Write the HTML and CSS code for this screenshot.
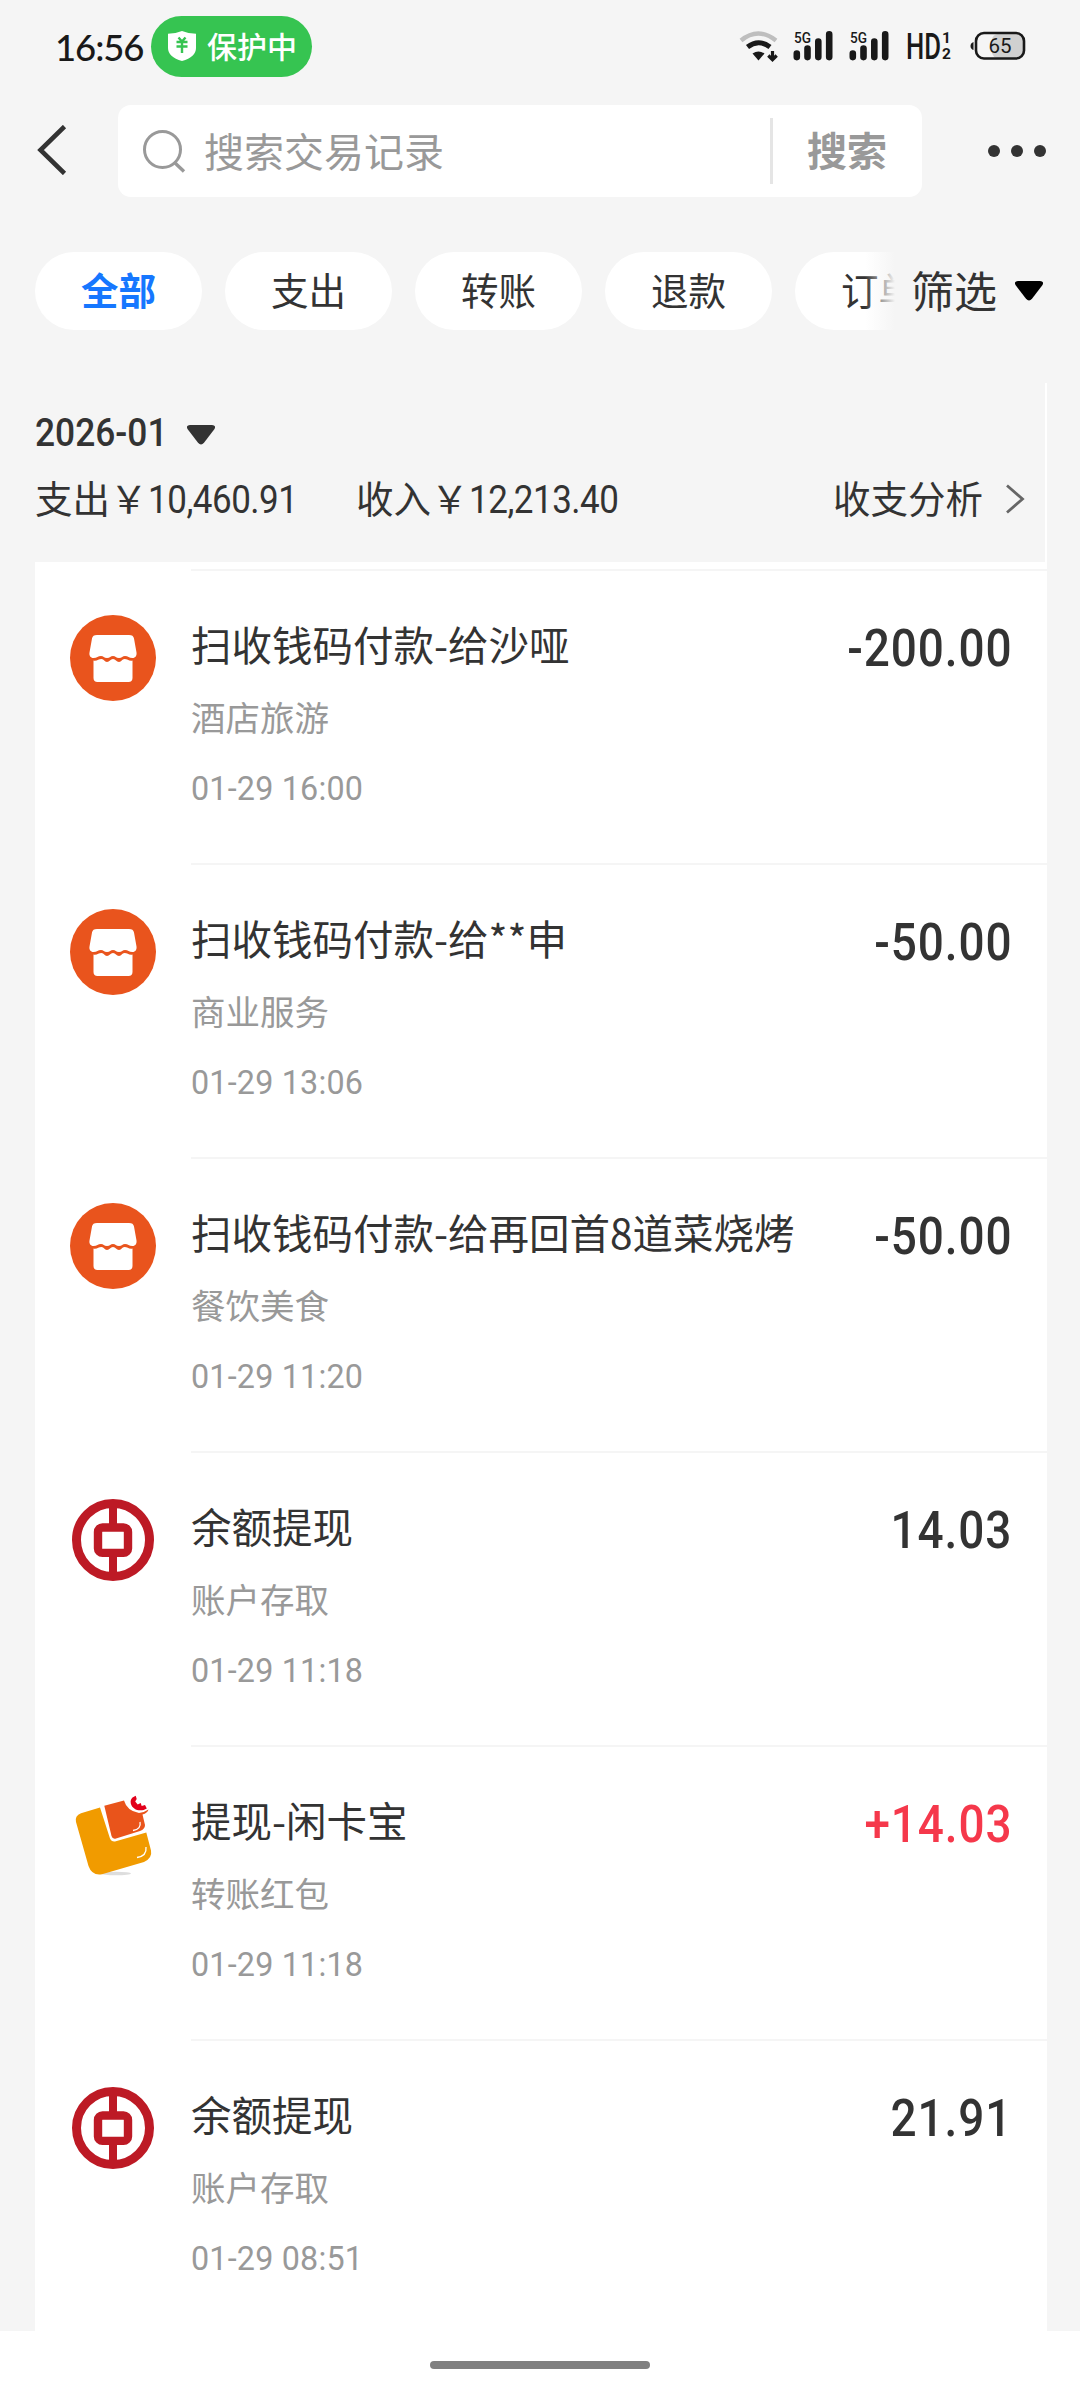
FILE: index.html
```html
<!DOCTYPE html>
<html lang="zh-CN">
<head>
    <meta charset="UTF-8">
    <meta name="viewport" content="width=device-width, initial-scale=1.0">
    <title>账单</title>
    <link rel="stylesheet" href="styles.css">
</head>
<body>

    <!-- Shared icons -->
    <svg class="icon-defs">
        <symbol id="icon-shop" viewBox="0 0 86 86">
            <circle cx="43" cy="43" r="43" fill="#e9541d"/>
            <path fill="#fff" d="M27 20h32c3 0 4.500 1 5 3.500l2.500 14c.4 3-1 5.500-4 5.500-3.500 0-4.500-2-7.500-2-2.500 0-3 2-6 2s-3.500-2-6-2-3 2-6 2-3.500-2-6-2c-3 0-4 2-7.500 2-3 0-4.500-2.500-4-5.500l2.500-14c.5-2.500 2-3.500 5-3.500z"/>
            <path fill="#fff" d="M23.500 45.500c3.500.8 5-1.500 8-1.500 2.500 0 3 3 5.500 3s3.500-3 6-3 3.500 3 6 3 3-3 5.500-3c3 0 4.500 2.300 8 1.500V63c0 2.500-1.500 4-4 4h-31c-2.500 0-4-1.500-4-4z"/>
        </symbol>
        <symbol id="icon-bank" viewBox="0 0 86 86">
            <g fill="none" stroke="#bd1a25">
                <circle cx="43" cy="43" r="36.500" stroke-width="9"/>
                <rect x="28" y="30.500" width="30" height="25.400" rx="4.500" stroke-width="8.400"/>
                <path d="M43 8v19M43 59v19" stroke-width="8"/>
            </g>
        </symbol>
        <symbol id="icon-card" viewBox="0 0 86 86">
            <ellipse cx="46" cy="82.500" rx="15" ry="1.800" fill="#ddd"/>
            <path fill="#f19b00" d="M30 16.500L11 22.300Q4.500 25 6 31L18.500 75Q22 85 32 83.200L74 71Q82.500 67 81 59.500L76.300 41.500 45 50.500Q41.500 51 40 47.500z"/>
            <path fill="#e9541b" d="M34.300 14.800L54 9.500Q57 20 69 22 74 21.500 78.500 18.500 77.500 22 72.500 23.500L75 34Q75 38 70 40L46 47.600Q42.500 48.500 41.500 45z"/>
            <path fill="#e2001b" d="M62.500 6.500l3.200-1.800 1 3.200-1.500 2.500 2.500 3 3-1.500 1 3 3.300-1 1.800 3.500c-6 4-14.500 1.500-16-5-.6-2.500.2-4.500 1.700-5.900z"/>
            <path fill="none" stroke="#fff" stroke-width="1.300" d="M70 31q1.500 7-7 8.500M76 56q1 9-9 10.500"/>
        </symbol>
        <symbol id="icon-caret" viewBox="0 0 28 20">
            <path fill="currentColor" d="M3 0h22q4.500.5 2.500 4L17 17.800q-3 3.600-6 0L.5 4Q-1.500.5 3 0z"/>
        </symbol>
    </svg>

    <div class="status-bar">
        <span class="clock">16:56</span>
        <div class="guard">
            <svg class="shield" viewBox="0 0 28 30">
                <path fill="#fff" d="M14 0q6 2.500 14 2.800V17q0 9-14 13Q0 26 0 17V2.800Q8 2.500 14 0z"/>
                <path fill="none" stroke="#36c451" stroke-width="2.400" d="M10.500 6.500l3.500 4 3.500-4M8.500 11h11M8.500 15.500h11M14 10v12"/>
            </svg>
            <span>保护中</span>
        </div>
        <div class="status-icons">
            <svg width="40" height="32" viewBox="0 0 40 32">
                <path fill="none" stroke="#bebebe" stroke-width="4.400" d="M2 10.500q17-14 35 0"/>
                <path fill="none" stroke="#191919" stroke-width="5" d="M8.500 17q11-8.500 22.500 0"/>
                <path fill="#191919" d="M13.500 23.500q6-4 12 0l-6 7z"/>
                <path fill="none" stroke="#191919" stroke-width="3.200" d="M33.500 21v8M29.300 25.500l4.200 4.200 4.200-4.200"/>
            </svg>
            <svg class="signal" width="42" height="32" viewBox="0 0 42 32">
                <text x="1" y="12.500" font-size="14.500" font-weight="500" textLength="17" lengthAdjust="spacingAndGlyphs">5G</text>
                <path d="M3.800 23.500v3.600M14.500 18.500v8.600M25.300 11.500v15.600M36.200 4.400v22.700"/>
            </svg>
            <svg class="signal" width="42" height="32" viewBox="0 0 42 32">
                <text x="1" y="12.500" font-size="14.500" font-weight="500" textLength="17" lengthAdjust="spacingAndGlyphs">5G</text>
                <path d="M3.800 23.500v3.600M14.500 18.500v8.600M25.300 11.500v15.600M36.200 4.400v22.700"/>
            </svg>
            <svg class="hd" width="48" height="32" viewBox="0 0 48 32">
                <text x="0" y="28.500" font-size="36" font-weight="500" textLength="35" lengthAdjust="spacingAndGlyphs">HD</text>
                <text x="36" y="13" font-size="15.500" font-weight="700">1</text>
                <text x="36" y="28.500" font-size="15.500" font-weight="700">2</text>
            </svg>
            <svg class="battery" width="56" height="32" viewBox="0 0 56 32">
                <path fill="#191919" d="M3.500 12v8q-3-1-3-4t3-4z"/>
                <rect x="22" y="4" width="31" height="24" rx="6" fill="#d0d0d0"/>
                <rect x="6" y="3" width="48" height="25.500" rx="8" fill="none" stroke="#191919" stroke-width="2.600"/>
                <text x="30" y="22.800" text-anchor="middle" font-size="20.500">65</text>
            </svg>
        </div>
    </div>

    <div class="nav-bar">
        <svg class="back" width="30" height="50" viewBox="0 0 30 50">
            <path fill="none" stroke="#333" stroke-width="4.600" d="M27.500 1.500L3.500 25l24 23.500"/>
        </svg>
        <div class="search-box">
            <svg width="44" height="44" viewBox="0 0 44 44" fill="none" stroke="#999">
                <circle cx="20.500" cy="20.500" r="18" stroke-width="3"/>
                <path d="M32 33l10 9.500" stroke-width="3.400"/>
            </svg>
            <span class="placeholder">搜索交易记录</span>
            <span class="search-btn">搜索</span>
        </div>
        <div class="more"><i></i><i></i><i></i></div>
    </div>

    <div class="filter-bar">
        <div class="chips">
            <span class="chip active">全部</span>
            <span class="chip">支出</span>
            <span class="chip">转账</span>
            <span class="chip">退款</span>
            <span class="chip">订单</span>
        </div>
        <div class="filter">
            <span>筛选</span>
            <svg class="caret"><use href="#icon-caret"/></svg>
        </div>
    </div>

    <div class="bill">
        <div class="summary">
            <div class="month">
                <span>2026-01</span>
                <svg class="caret"><use href="#icon-caret"/></svg>
            </div>
            <div class="totals">
                <span class="total">支出￥<em>10,460.91</em></span>
                <span class="total">收入￥<em>12,213.40</em></span>
                <span class="analysis">收支分析</span>
                <svg class="arrow" width="20" height="30" viewBox="0 0 20 30">
                    <path fill="none" stroke="#666" stroke-width="2.800" d="M2 1.500L17.500 15 2 28.500"/>
                </svg>
            </div>
        </div>

        <div class="record">
            <svg class="avatar"><use href="#icon-shop"/></svg>
            <div class="info">
                <div class="text">
                    <p class="title">扫收钱码付款-给沙哑</p>
                    <p class="category">酒店旅游</p>
                    <p class="time">01-29 16:00</p>
                </div>
                <span class="amount">-200.00</span>
            </div>
        </div>
        <div class="record">
            <svg class="avatar"><use href="#icon-shop"/></svg>
            <div class="info">
                <div class="text">
                    <p class="title">扫收钱码付款-给**申</p>
                    <p class="category">商业服务</p>
                    <p class="time">01-29 13:06</p>
                </div>
                <span class="amount">-50.00</span>
            </div>
        </div>
        <div class="record">
            <svg class="avatar"><use href="#icon-shop"/></svg>
            <div class="info">
                <div class="text">
                    <p class="title">扫收钱码付款-给再回首8道菜烧烤</p>
                    <p class="category">餐饮美食</p>
                    <p class="time">01-29 11:20</p>
                </div>
                <span class="amount">-50.00</span>
            </div>
        </div>
        <div class="record">
            <svg class="avatar"><use href="#icon-bank"/></svg>
            <div class="info">
                <div class="text">
                    <p class="title">余额提现</p>
                    <p class="category">账户存取</p>
                    <p class="time">01-29 11:18</p>
                </div>
                <span class="amount">14.03</span>
            </div>
        </div>
        <div class="record">
            <svg class="avatar"><use href="#icon-card"/></svg>
            <div class="info">
                <div class="text">
                    <p class="title">提现-闲卡宝</p>
                    <p class="category">转账红包</p>
                    <p class="time">01-29 11:18</p>
                </div>
                <span class="amount income">+14.03</span>
            </div>
        </div>
        <div class="record">
            <svg class="avatar"><use href="#icon-bank"/></svg>
            <div class="info">
                <div class="text">
                    <p class="title">余额提现</p>
                    <p class="category">账户存取</p>
                    <p class="time">01-29 08:51</p>
                </div>
                <span class="amount">21.91</span>
            </div>
        </div>
    </div>

    <div class="home-bar"><i></i></div>

</body>
</html>
```

FILE: styles.css
```css
* {
    box-sizing: border-box;
}

body {
    margin: 0;
    width: 1080px;
    height: 2400px;
    overflow: hidden;
    display: flex;
    flex-direction: column;
    background: #f5f5f5;
    color: #333;
    font-family: "Noto Sans CJK SC", sans-serif;
}

svg {
    display: block;
    flex: none;
}

.icon-defs {
    display: none;
}

/* Status bar */
.status-bar {
    height: 92px;
    flex: none;
    display: flex;
    align-items: center;
    padding: 0 54px 0 55px;
}

.clock {
    width: 96px;
    font-family: Lato, sans-serif;
    font-size: 36.500px;
    font-weight: 500;
    letter-spacing: -1.1px;
    line-height: 61px;
    color: #191919;
    padding-top: 3px;
}

.guard {
    width: 161px;
    height: 61px;
    border-radius: 31px;
    background: #36c451;
    color: #fff;
    display: flex;
    align-items: center;
    padding-left: 17px;
    gap: 11px;
    font-size: 30px;
    font-weight: 500;
    line-height: 58px;
}

.guard span {
    height: 61px;
}

.shield {
    width: 28px;
    height: 30px;
}

.status-icons {
    margin-left: auto;
    display: flex;
    align-items: center;
}

.status-icons text {
    font-family: Roboto, sans-serif;
    fill: #191919;
}

.signal {
    margin-left: 14px;
}

.signal path {
    stroke: #191919;
    stroke-width: 6.600px;
    stroke-linecap: round;
}

.hd {
    margin-left: 15px;
}

.battery {
    margin-left: 16px;
}

/* Search */
.nav-bar {
    height: 118px;
    flex: none;
    display: flex;
    align-items: center;
    padding: 0 34px 0 37px;
}

.back {
    margin-bottom: 3px;
}

.search-box {
    width: 804px;
    height: 92px;
    margin-left: 51px;
    background: #fff;
    border-radius: 13px;
    display: flex;
    align-items: center;
    padding-left: 24px;
    color: #999;
    font-size: 40px;
}

.placeholder {
    margin: 0 0 3px 18px;
}

.search-btn {
    margin-left: auto;
    width: 152px;
    border-left: 3px solid #e5e5e5;
    height: 66px;
    line-height: 63px;
    padding-left: 34px;
    font-weight: 700;
}

.more {
    margin-left: auto;
    display: flex;
    gap: 11px;
}

.more i {
    width: 12px;
    height: 12px;
    border-radius: 50%;
    background: #333;
}

/* Filter chips */
.filter-bar {
    height: 78px;
    flex: none;
    margin-top: 42px;
    padding: 0 37px 0 35px;
    display: flex;
    align-items: center;
}

.chips {
    width: 860px;
    overflow: hidden;
    display: flex;
    gap: 23px;
    position: relative;
}

.chips::after {
    content: "";
    position: absolute;
    right: 0;
    top: 0;
    width: 30px;
    height: 78px;
    background: linear-gradient(to right, rgba(245, 245, 245, 0), #f5f5f5);
}

.chip {
    flex: none;
    width: 167px;
    height: 78px;
    line-height: 74px;
    border-radius: 39px;
    background: #fff;
    text-align: center;
    font-size: 37.500px;
}

.chip.active {
    color: #1677ff;
    font-weight: 700;
}

.filter {
    flex: 1;
    margin-left: 16px;
    display: flex;
    align-items: center;
    justify-content: space-between;
    font-size: 43px;
    line-height: 72px;
}

.filter span {
    height: 76px;
}

.caret {
    width: 28px;
    height: 20px;
}

.filter .caret {
    color: #000;
}

/* Month summary */
.bill {
    flex: none;
    width: 1012px;
    height: 1948px;
    margin: 53px 0 0 35px;
    background: #fff;
    overflow: hidden;
}

.summary {
    height: 179px;
    width: 1010px;
    padding-top: 17px;
    margin-bottom: 7px;
    background: #f5f5f5;
}

.month {
    display: flex;
    align-items: center;
    height: 66px;
    font-family: Roboto, sans-serif;
    font-size: 38px;
    font-weight: 500;
}

.month span {
    width: 152px;
    transform: scaleX(.93);
    transform-origin: left;
}

.month .caret {
    margin-top: 4px;
}

.totals {
    display: flex;
    align-items: center;
    height: 60px;
    font-size: 37.500px;
    padding-right: 20px;
}

.total {
    width: 321px;
    white-space: nowrap;
}

/* Narrow figures */
.total em {
    display: inline-block;
    font-family: Roboto, sans-serif;
    font-style: normal;
    font-size: 38px;
    letter-spacing: -0.5px;
    transform: scaleX(.92);
    transform-origin: left;
}

.analysis {
    margin-left: auto;
    margin-right: 22px;
}

.arrow {
    margin-top: 5px;
}

/* Records */
.record {
    display: flex;
    height: 294px;
    padding-left: 35px;
}

.avatar {
    width: 86px;
    height: 86px;
    margin-top: 46px;
}

.info {
    flex: 1;
    margin-left: 35px;
    padding: 37px 35px 0 0;
    border-top: 2px solid #f5f5f5;
    display: flex;
    justify-content: space-between;
}

.text p {
    margin: 0;
    white-space: nowrap;
}

.title {
    font-size: 40.500px;
    line-height: 72px;
}

.text .category {
    font-size: 34.500px;
    line-height: 72px;
    color: #999;
}

.text .time {
    font-family: Roboto, sans-serif;
    font-size: 34px;
    line-height: 72px;
    letter-spacing: 0.2px;
    color: #999;
    transform: scaleX(.95);
    transform-origin: left;
}

.amount {
    font-family: Roboto, sans-serif;
    font-size: 51px;
    font-weight: 500;
    line-height: 81px;
    letter-spacing: 1px;
    transform: scaleX(.9);
    transform-origin: right;
}

.income {
    color: #f5384b;
}

/* Home indicator */
.home-bar {
    flex: 1;
    background: #fff;
    display: flex;
    justify-content: center;
    padding-top: 30px;
}

.home-bar i {
    width: 220px;
    height: 8px;
    border-radius: 4px;
    background: #808080;
}
```
